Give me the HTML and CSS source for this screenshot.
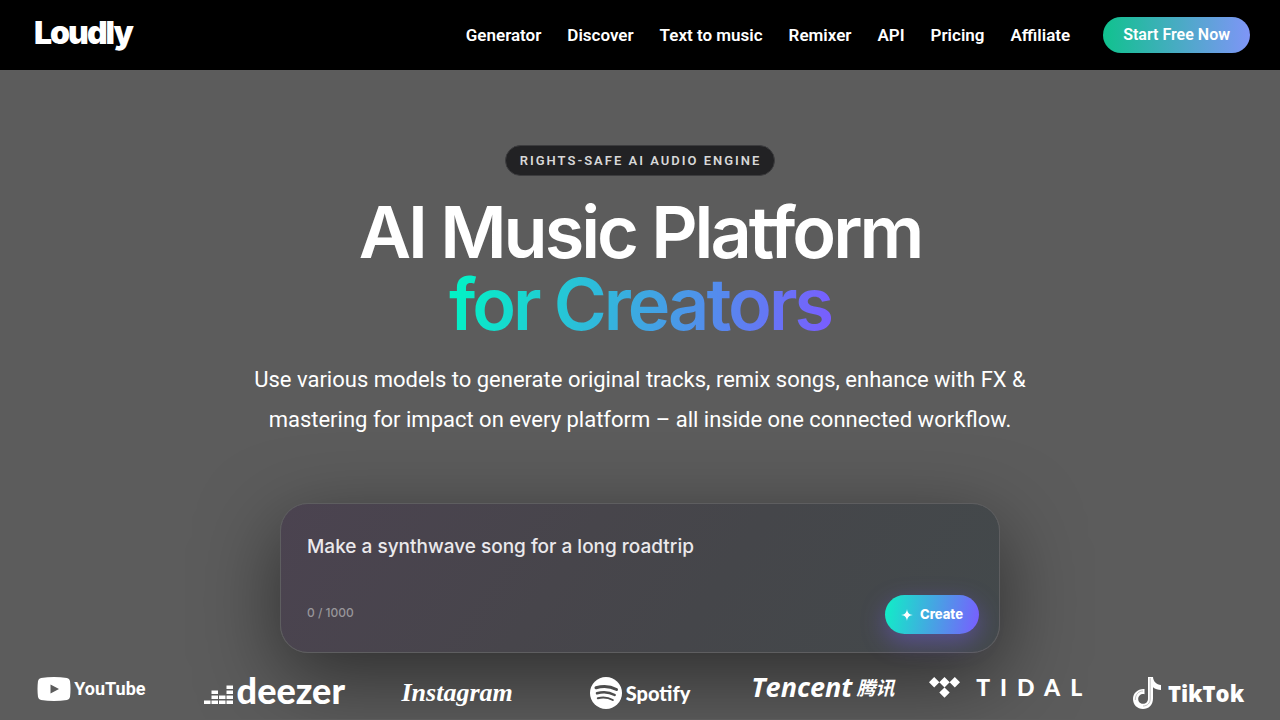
FILE: index.html
```
<!DOCTYPE html>
<html lang="en">
<head>
<meta charset="utf-8">
<meta name="viewport" content="width=device-width, initial-scale=1">
<title>Loudly – AI Music Platform</title>
<link rel="stylesheet" href="styles.css">
</head>
<body>
<header class="header">
  <a class="brand" href="#">Loudly</a>
  <nav class="nav">
    <a href="#">Generator</a>
    <a href="#">Discover</a>
    <a href="#">Text to music</a>
    <a href="#">Remixer</a>
    <a href="#">API</a>
    <a href="#">Pricing</a>
    <a href="#">Affiliate</a>
  </nav>
  <a class="signup" href="#">Start Free Now</a>
</header>
<main class="hero">
  <p class="badge">RIGHTS-SAFE AI AUDIO ENGINE</p>
  <h1 class="title">AI Music Platform <span class="title-accent">for Creators</span></h1>
  <p class="lead">Use various models to generate original tracks, remix songs, enhance with FX &amp; mastering for impact on every platform – all inside one connected workflow.</p>
  <form class="prompt">
    <textarea class="prompt-text" aria-label="Describe your song" maxlength="1000" rows="1" placeholder="Make a synthwave song for a long roadtrip"></textarea>
    <div class="prompt-footer">
      <span class="counter">0 / 1000</span>
      <button class="create" type="button">
        <svg width="12" height="12" viewBox="0 0 12 12" aria-hidden="true"><path d="M6 0C6.500 4 8 5.500 12 6C8 6.500 6.500 8 6 12C5.500 8 4 6.500 0 6C4 5.500 5.500 4 6 0Z" fill="#fff"/></svg>
        Create
      </button>
    </div>
  </form>
  <ul class="partners">
    <li class="partner youtube">
      <svg width="34" height="24" viewBox="0 0 34 24" aria-hidden="true"><path fill-rule="evenodd" d="M4 1Q17-.8 30 1Q32.500 1.500 33 4Q34 12 33 20Q32.500 22.500 30 23Q17 24.800 4 23Q1.500 22.500 1 20Q0 12 1 4Q1.500 1.500 4 1ZM13.500 7.500V16.500L22 12Z" fill="#fff"/></svg>
      <span>YouTube</span>
    </li>
    <li class="partner deezer">
      <svg width="29" height="27" viewBox="0 0 29 27" fill="#fff" aria-hidden="true"><path d="M0 23.500h6.500V27H0zM7.500 23.500H14V27H7.500zM7.500 18.500H14V22H7.500zM7.500 13.500H14V17H7.500zM15 23.500h6.500V27H15zM15 18.500h6.500V22H15zM22.500 23.500H29V27H22.500zM22.500 18.500H29V22H22.500zM22.500 13.500H29V17H22.500zM22.500 8.500H29V12H22.500z"/></svg>
      <span>deezer</span>
    </li>
    <li class="partner instagram"><span>Instagram</span></li>
    <li class="partner spotify">
      <svg width="32" height="32" viewBox="0 0 32 32" aria-hidden="true"><circle cx="16" cy="16" r="16" fill="#fff"/><g fill="none" stroke="#4c4c4c" stroke-linecap="round"><path d="M6 10.800Q17 7.500 26.500 12.500" stroke-width="3"/><path d="M7 16.300Q16.500 13.500 24.700 18" stroke-width="2.500"/><path d="M7.800 21.200Q16 19.200 22.800 23" stroke-width="2"/></g></svg>
      <span>Spotify</span>
    </li>
    <li class="partner tencent"><span>Tencent</span><span class="tencent-cn" lang="zh">腾讯</span></li>
    <li class="partner tidal">
      <svg width="31" height="21" viewBox="0 0 31 21" aria-hidden="true"><path d="M5.200 0L10.400 5.200L5.200 10.400L0 5.200ZM15.500 0L20.700 5.200L15.500 10.400L10.300 5.200ZM25.800 0L31 5.200L25.800 10.400L20.600 5.200ZM15.500 10.400L20.700 15.600L15.500 20.800L10.300 15.600Z" fill="#fff"/></svg>
      <span>TIDAL</span>
    </li>
    <li class="partner tiktok">
      <svg width="28" height="32" viewBox="0 0 28 32" aria-hidden="true"><path d="M15 0H20C20.300 4.500 23.500 7.800 28 8V13C25 13 22.200 12 20 10.300V21.500C20 28 15.500 32 10 32C4.300 32 0 27.700 0 22C0 16 5 11.500 11.500 12V17.200C8 16.500 5.200 18.800 5.200 22C5.200 24.800 7.300 26.800 10 26.800C13 26.800 15 24.800 15 21.500Z" fill="#fff"/><path d="M2.300 23C2.300 17 6 14 10 14M17.200 1V22C17.200 26 14.500 29 10 29" fill="none" stroke="#999" stroke-width=".6"/></svg>
      <span>TikTok</span>
    </li>
  </ul>
</main>
</body>
</html>
```
FILE: styles.css
```
* { box-sizing: border-box; }

body {
  margin: 0;
  background: #5c5c5c;
  color: #fff;
  font-family: Roboto, "Liberation Sans", sans-serif;
}

a { color: inherit; text-decoration: none; }

.header {
  display: flex;
  align-items: center;
  height: 70px;
  padding: 0 30px 0 34px;
  background: #000;
}

.brand {
  margin-right: auto;
  padding-bottom: 4px;
  font: 900 32px/40px Inter, sans-serif;
  letter-spacing: -2px;
}

.nav {
  display: flex;
  gap: 26px;
  margin-right: 33px;
  font-size: 17px;
  font-weight: 600;
  line-height: 24px;
}

.signup {
  padding: 6px 20px;
  border-radius: 18px;
  background: linear-gradient(90deg, #10c28e, #7f95f7);
  font-size: 16px;
  font-weight: 600;
  line-height: 24px;
}

.hero {
  display: flex;
  flex-direction: column;
  align-items: center;
  padding: 75px 0 10px;
}

.badge {
  margin: 0;
  padding: 7px 13px 7px 14px;
  border: 1px solid #3c3c3e;
  border-radius: 16px;
  background: #222224;
  color: #d8d8d8;
  font-size: 13px;
  font-weight: 600;
  line-height: 15px;
  letter-spacing: 2px;
}

.title {
  margin: 20px 0 0;
  font: 600 72px/72px Inter, sans-serif;
  letter-spacing: -3px;
  text-align: center;
}

.title-accent {
  display: block;
  width: fit-content;
  margin: 0 auto;
  background: linear-gradient(100deg, #00f5c4, #7a5cff);
  background-clip: text;
  -webkit-background-clip: text;
  color: transparent;
}

.lead {
  max-width: 800px;
  margin: 20px 0 0;
  font-size: 22px;
  line-height: 40px;
  text-align: center;
}

.prompt {
  display: flex;
  flex-direction: column;
  justify-content: space-between;
  width: 100%;
  max-width: 720px;
  min-height: 150px;
  margin-top: 63px;
  padding: 28px 20px 18px 26px;
  border: 1px solid #5e5e60;
  border-radius: 28px;
  background: linear-gradient(125deg, #4b4350, #47454b 40%, #45464a 60%, #43494b);
  box-shadow: 0 24px 80px rgba(0, 0, 0, 0.5);
}

.prompt-text {
  width: 100%;
  padding: 0;
  border: 0;
  outline: 0;
  background: transparent;
  color: #eee;
  font: 500 19px/30px Inter, sans-serif;
  resize: none;
  overflow: hidden;
}

.prompt-text::placeholder { color: #ebe9ec; opacity: 1; }

.prompt-footer {
  display: flex;
  align-items: center;
  justify-content: space-between;
}

.counter {
  padding-bottom: 4px;
  color: #98969a;
  font: 500 12px/16px Inter, sans-serif;
}

.create {
  display: flex;
  align-items: center;
  gap: 7px;
  padding: 11px 16px;
  border: 0;
  border-radius: 20px;
  background: linear-gradient(100deg, #0ff0c6, #7a5cff);
  box-shadow: 0 8px 24px rgba(122, 92, 255, 0.4);
  color: #fff;
  font: 800 13px/17px Inter, sans-serif;
}

.partners {
  display: grid;
  grid-template-columns: repeat(7, 1fr);
  width: 100%;
  margin: 24px 0 0;
  padding: 0;
  list-style: none;
}

.partner {
  display: flex;
  align-items: center;
  justify-content: center;
  height: 32px;
  white-space: nowrap;
}

.youtube { height: 24px; gap: 3px; font: 700 18px/24px Roboto, sans-serif; }
.deezer { height: 27px; gap: 4px; font: 900 36px/27px Lato, sans-serif; }
.instagram { font: italic 700 26px/28px "Liberation Serif", serif; }
.spotify { gap: 4px; font: 900 20px/32px Lato, sans-serif; }
.tencent { height: 20px; gap: 4px; font: italic 700 27px/20px "Open Sans", sans-serif; }
.tencent-cn { font: italic 700 19px/20px "Noto Sans CJK SC", sans-serif; }
.tidal { height: 21px; gap: 16px; padding-left: 10px; font: 900 23px/21px Lato, sans-serif; letter-spacing: 10px; }
.tiktok { gap: 7px; font: 800 22px/32px "Open Sans", sans-serif; }
```
